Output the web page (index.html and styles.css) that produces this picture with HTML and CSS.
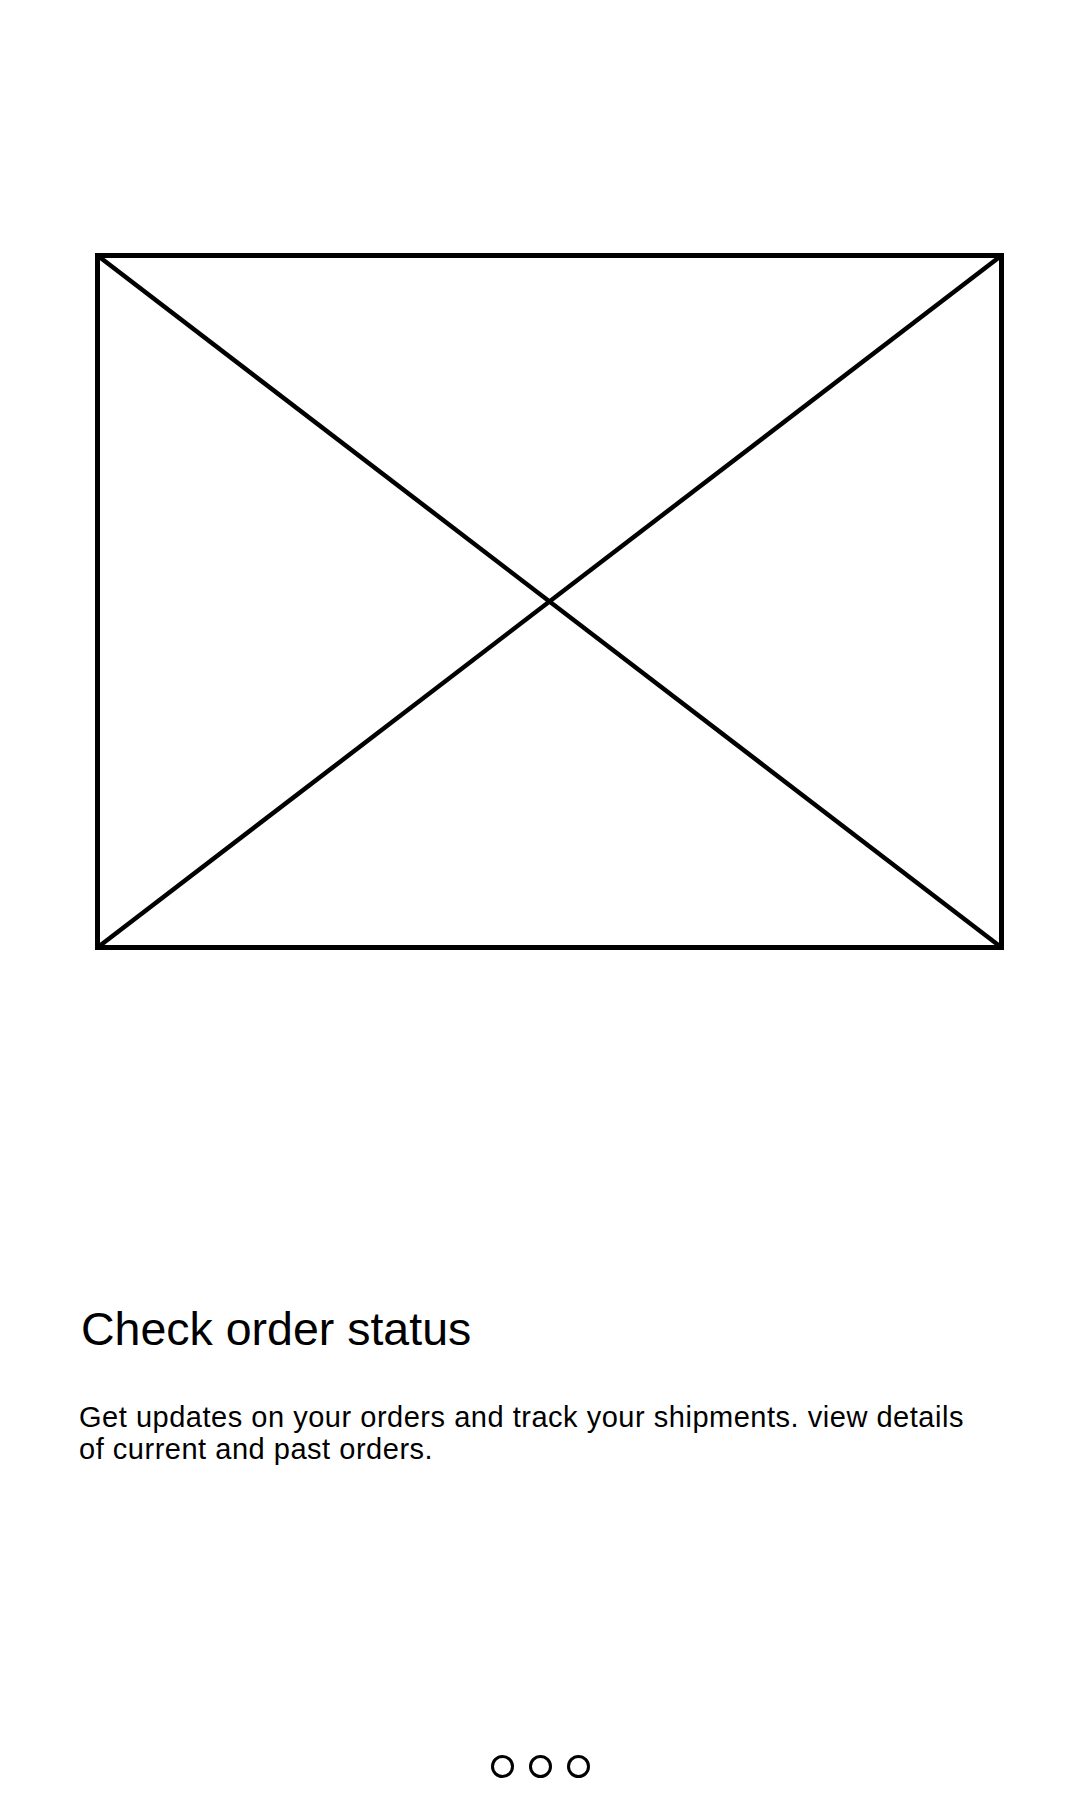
FILE: index.html
```html
<!DOCTYPE html>
<html>
  <head>
    <title>Check order status</title>
    <link rel="stylesheet" href="styles.css">
  </head>
  <body>
    <div class="screen">
      <div class="placeholder">
        <svg width="909" height="697" viewBox="0 0 909 697">
          <rect x="2.5" y="2.5" width="904" height="692" fill="none" stroke="#000" stroke-width="5" />
          <line x1="2.5" y1="2.5" x2="906.5" y2="694.5" stroke="#000" stroke-width="4.5" />
          <line x1="906.5" y1="2.5" x2="2.5" y2="694.5" stroke="#000" stroke-width="4.5" />
        </svg>
      </div>

      <h1 class="title">Check order status</h1>
      <p class="description">Get updates on your orders and track your shipments. view details of current and past orders.</p>

      <div class="pager">
        <span class="dot"></span>
        <span class="dot"></span>
        <span class="dot"></span>
      </div>
    </div>
  </body>
</html>
```

FILE: styles.css
```css
/* General Styles */
body {
  font-family: "Liberation Sans", Arial, sans-serif;
  background-color: #ffffff;
  color: #000000;
  margin: 0;
  padding: 0;
}

.screen {
  width: 1080px;
  height: 1800px;
  display: flex;
  flex-direction: column;
}

/* Image placeholder */
.placeholder {
  margin-top: 253px;
  margin-left: 95px;
  height: 697px;
}

.placeholder svg {
  display: block;
}

/* Text */
.title {
  margin: 356px 0 0 81px;
  font-size: 46.5px;
  font-weight: normal;
  line-height: 46px;
}

.description {
  margin: 49px 0 0 79px;
  width: 900px;
  font-size: 29px;
  letter-spacing: 0.52px;
  line-height: 32px;
}

/* Pager dots */
.pager {
  margin-top: 290px;
  display: flex;
  justify-content: center;
  gap: 15px;
}

.dot {
  width: 23px;
  height: 23px;
  box-sizing: border-box;
  border: 3px solid #000000;
  border-radius: 50%;
}
```
